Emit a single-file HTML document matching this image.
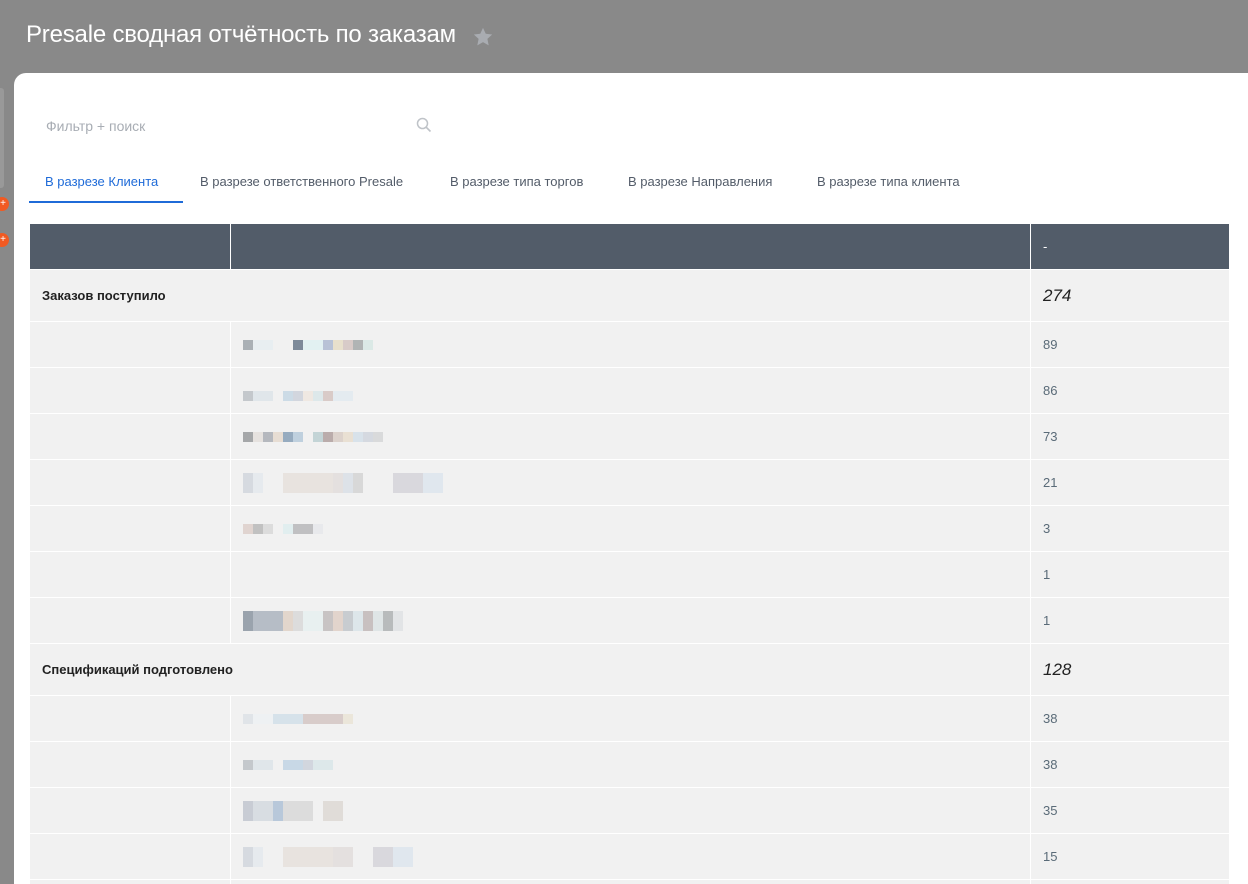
<!DOCTYPE html>
<html><head><meta charset="utf-8"><style>
*{margin:0;padding:0;box-sizing:border-box}
html,body{width:1248px;height:884px;overflow:hidden}
body{background:#898989;font-family:"Segoe UI","Liberation Sans","DejaVu Sans",sans-serif;position:relative}
.title{position:absolute;left:26px;top:21px;color:#fff;font-size:24px;font-weight:300;letter-spacing:-0.2px}
.star{position:absolute;left:472px;top:26px}
.side{position:absolute;left:0;top:88px;width:4px;height:100px;background:#999;border-radius:0 3px 3px 0}
.dot{position:absolute;left:-5px;width:14px;height:14px;border-radius:50%;background:#f15a22;color:#fff;font-size:10px;line-height:14px;text-align:right;padding-right:3px}
.card{position:absolute;left:14px;top:73px;width:1250px;height:830px;background:#fff;border-radius:12px 0 0 0}
.search{position:absolute;left:46px;top:118px;font-size:14px;color:#a8adb4}
.tabs{position:absolute;left:29px;top:174px;font-size:13px;color:#535c69;font-weight:500}
.tab{position:absolute;top:0;white-space:nowrap}
.uline{position:absolute;left:29px;top:201px;width:154px;height:2px;background:#1f6bd8}
table{position:absolute;left:29px;top:223px;border-collapse:collapse;width:1201px}
td{border:1px solid #fff;background:#f1f1f1;font-size:13px;color:#5a6b78;padding:0 12px}
tr.h td{background:#525c69;height:46px;color:#fff}
tr.g td{height:52px;font-weight:bold;color:#222}
tr.d td{height:46px}
.big{font-style:italic;font-weight:normal!important;font-size:17px;color:#333}
.px{display:flex;gap:0}
.px i{display:inline-block;width:10px;height:10px}
</style></head><body>
<div class="title">Presale сводная отчётность по заказам</div>
<svg class="star" width="22" height="22" viewBox="0 0 24 24"><path d="M12 2l3 6.5 7 .8-5.2 4.8 1.4 7L12 17.6 5.8 21.1l1.4-7L2 9.3l7-.8z" fill="#a9acb1"/></svg>
<div class="side"></div>
<div class="dot" style="top:197px">+</div>
<div class="dot" style="top:233px">+</div>
<div class="card"></div>
<div class="search">Фильтр + поиск</div>
<svg style="position:absolute;left:416px;top:117px" width="16" height="16" viewBox="0 0 16 16"><circle cx="6.5" cy="6.5" r="5" stroke="#bfc3c8" stroke-width="1.5" fill="none"/><path d="M10 10l4.5 4.5" stroke="#bfc3c8" stroke-width="1.6"/></svg>
<div class="tabs">
<span class="tab" style="left:16px;color:#1f6bd8">В разрезе Клиента</span>
<span class="tab" style="left:171px">В разрезе ответственного Presale</span>
<span class="tab" style="left:421px">В разрезе типа торгов</span>
<span class="tab" style="left:599px">В разрезе Направления</span>
<span class="tab" style="left:788px">В разрезе типа клиента</span>
</div>
<div class="uline"></div>
<table>
<tr class="h"><td style="width:201px"></td><td style="width:800px"></td><td>-</td></tr>
<tr class="g"><td colspan="2">Заказов поступило</td><td class="big">274</td></tr>
<tr class="d"><td></td><td><div class="px"><i style="background:#aab0b5"></i><i style="background:#e8eef1;width:20px"></i><i style="width:20px"></i><i style="background:#7d8a99"></i><i style="background:#e2f1f2;width:20px"></i><i style="background:#b8c2d6"></i><i style="background:#e8e0cc"></i><i style="background:#d8cbc8"></i><i style="background:#b0b4b4"></i><i style="background:#dbe9e6"></i></div></td><td>89</td></tr>
<tr class="d"><td></td><td><div class="px" style="margin-top:10px"><i style="background:#c4c8cc"></i><i style="background:#e0e6ea;width:20px"></i><i style="width:10px"></i><i style="background:#ccdbe6"></i><i style="background:#d2d6de"></i><i style="background:#efe8e2"></i><i style="background:#dde8ea"></i><i style="background:#d9cbc8"></i><i style="background:#e4ebf0;width:20px"></i></div></td><td>86</td></tr>
<tr class="d"><td></td><td><div class="px"><i style="background:#a5a7a9"></i><i style="background:#e6e2df"></i><i style="background:#b5b8be"></i><i style="background:#e7ddd3"></i><i style="background:#96abbf"></i><i style="background:#bfd0de"></i><i style="width:10px"></i><i style="background:#c3d4d6"></i><i style="background:#baacab"></i><i style="background:#dcd2cc"></i><i style="background:#e9e0d3"></i><i style="background:#d8e2ea"></i><i style="background:#d5d9e0"></i><i style="background:#d9dadb"></i></div></td><td>73</td></tr>
<tr class="d"><td></td><td><div class="px"><i style="background:#d6dae0;height:20px"></i><i style="background:#e6eaee;height:20px"></i><i style="width:20px"></i><i style="background:#e8e3df;height:20px;width:50px"></i><i style="background:#e4e0df;height:20px"></i><i style="background:#dde2e8;height:20px"></i><i style="background:#d8d8d8;height:20px"></i><i style="width:30px"></i><i style="background:#d9d8dd;height:20px;width:30px"></i><i style="background:#e0e7ee;height:20px;width:20px"></i></div></td><td>21</td></tr>
<tr class="d"><td></td><td><div class="px"><i style="background:#e0d4d0"></i><i style="background:#c1c1c1"></i><i style="background:#dcdcdc"></i><i style="width:10px"></i><i style="background:#e1eeef"></i><i style="background:#c0c0c2;width:20px"></i><i style="background:#e8e9ec"></i></div></td><td>3</td></tr>
<tr class="d"><td></td><td></td><td>1</td></tr>
<tr class="d"><td></td><td><div class="px"><i style="background:#9aa3ad;height:20px"></i><i style="background:#b6bdc6;height:20px;width:30px"></i><i style="background:#e2d6cc;height:20px"></i><i style="background:#dcdcdc;height:20px"></i><i style="background:#e8f0f0;height:20px;width:20px"></i><i style="background:#c8c4c4;height:20px"></i><i style="background:#e2d4cc;height:20px"></i><i style="background:#c8ccd0;height:20px"></i><i style="background:#dde6ea;height:20px"></i><i style="background:#c8c0c0;height:20px"></i><i style="background:#dfe5e6;height:20px"></i><i style="background:#b8bbbc;height:20px"></i><i style="background:#e2e4e6;height:20px"></i></div></td><td>1</td></tr>
<tr class="g"><td colspan="2">Спецификаций подготовлено</td><td class="big">128</td></tr>
<tr class="d"><td></td><td><div class="px"><i style="background:#e0e4e8"></i><i style="background:#eef1f3;width:20px"></i><i style="background:#d6e2ea;width:30px"></i><i style="background:#d8ccca;width:40px"></i><i style="background:#ebe6da"></i></div></td><td>38</td></tr>
<tr class="d"><td></td><td><div class="px"><i style="background:#c4c8cc"></i><i style="background:#e0e6ea;width:20px"></i><i style="width:10px"></i><i style="background:#c8d8e6;width:20px"></i><i style="background:#d2d6de"></i><i style="background:#dde8ea;width:20px"></i></div></td><td>38</td></tr>
<tr class="d"><td></td><td><div class="px"><i style="background:#c8ccd4;height:20px"></i><i style="background:#d8dde2;height:20px;width:20px"></i><i style="background:#b8c8da;height:20px"></i><i style="background:#dcdcdc;height:20px;width:30px"></i><i style="width:10px"></i><i style="background:#e0dcd8;height:20px;width:20px"></i></div></td><td>35</td></tr>
<tr class="d"><td></td><td><div class="px"><i style="background:#d6dae0;height:20px"></i><i style="background:#e6eaee;height:20px"></i><i style="width:20px"></i><i style="background:#e8e3df;height:20px;width:50px"></i><i style="background:#e4e0df;height:20px;width:20px"></i><i style="width:20px"></i><i style="background:#d9d8dd;height:20px;width:20px"></i><i style="background:#e0e7ee;height:20px;width:20px"></i></div></td><td>15</td></tr>
<tr class="d"><td></td><td></td><td></td></tr>
</table>
</body></html>
